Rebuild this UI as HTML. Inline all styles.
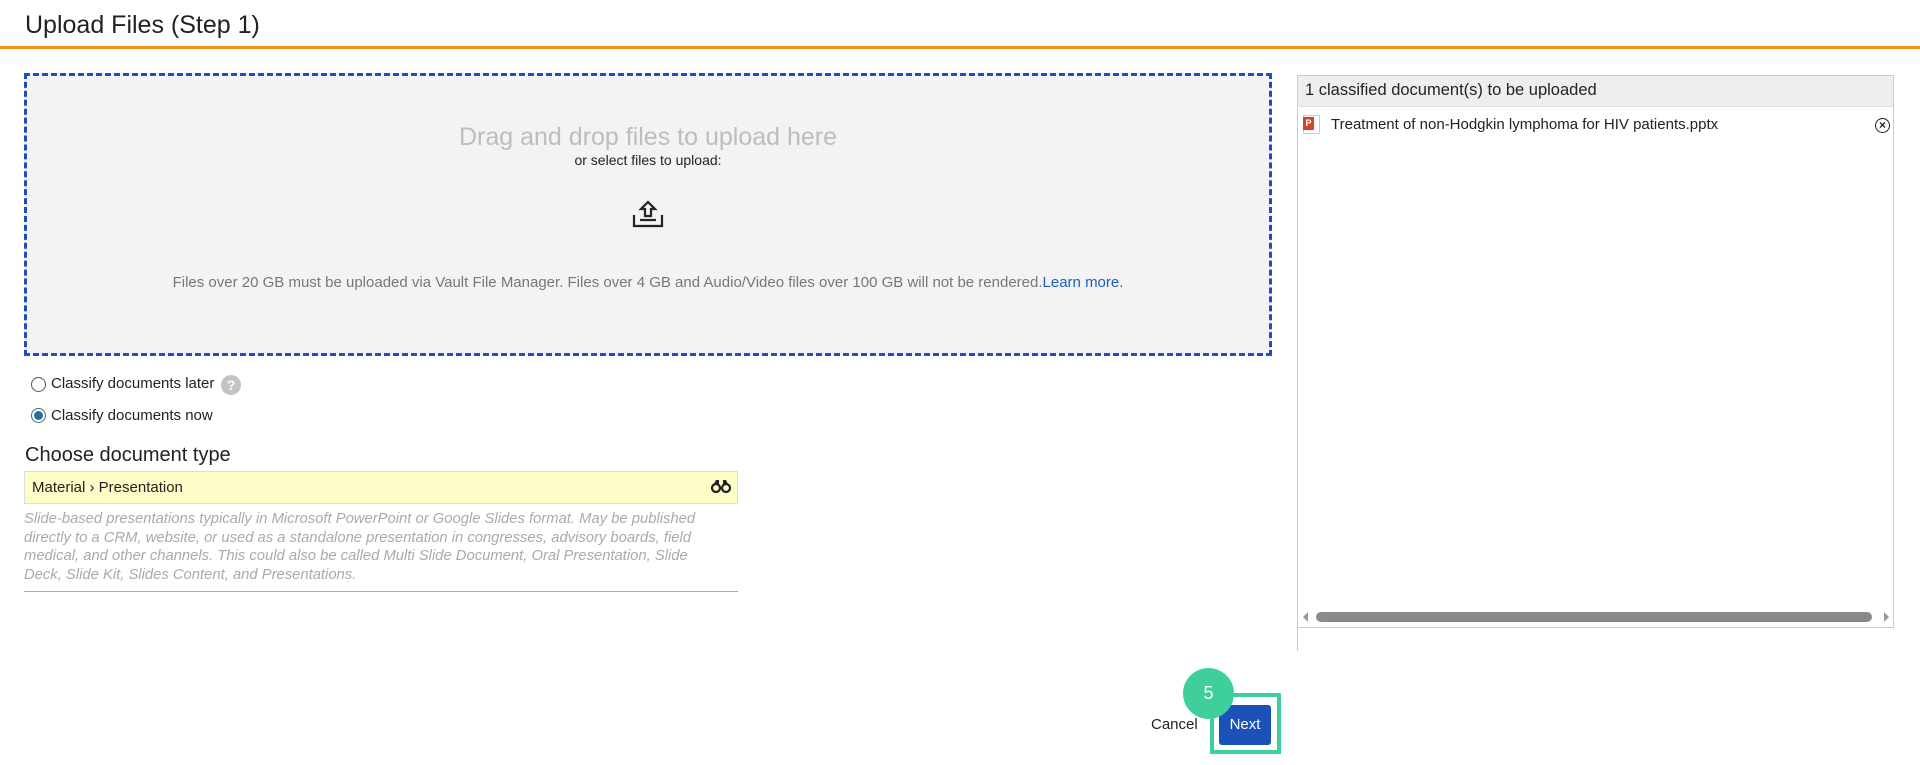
<!DOCTYPE html>
<html><head><meta charset="utf-8"><style>
*{box-sizing:border-box;margin:0;padding:0}
body{width:1920px;height:765px;background:#fff;font-family:"Liberation Sans",Arial,sans-serif;position:relative;overflow:hidden;color:#222}
.a{position:absolute}
</style></head><body>
<div class="a" style="left:25px;top:11px;font-size:25px;color:#222">Upload Files (Step 1)</div>
<div class="a" style="left:0;top:46px;width:1920px;height:3px;background:#f7941d"></div>

<div class="a" style="left:24px;top:73px;width:1248px;height:283px;background:#f3f3f3;border:3px dashed #1f4fbf"></div>
<div class="a" style="left:24px;top:123px;width:1248px;text-align:center;font-size:25px;color:#bdbdbd">Drag and drop files to upload here</div>
<div class="a" style="left:24px;top:152px;width:1248px;text-align:center;font-size:14px;color:#222">or select files to upload:</div>
<svg class="a" style="left:632px;top:199px" width="32" height="30" viewBox="0 0 32 30" fill="none" stroke="#222" stroke-width="2.2">
<path d="M2 16v11h28V16"/><path d="M8 21h16"/><path d="M16 3l-7 7h4v7h6v-7h4z"/></svg>
<div class="a" style="left:24px;top:274px;width:1248px;text-align:center;font-size:15px;color:#777">Files over 20 GB must be uploaded via Vault File Manager. Files over 4 GB and Audio/Video files over 100 GB will not be rendered.<span style="color:#1a5fbf">Learn more.</span></div>

<div class="a" style="left:31px;top:377px;width:15px;height:15px;border:1px solid #555;border-radius:50%;background:#fff"></div>
<div class="a" style="left:51px;top:375px;font-size:15px">Classify documents later</div>
<div class="a" style="left:221px;top:375px;width:20px;height:20px;border-radius:50%;background:#c4c4c4;color:#fff;font-weight:bold;font-size:14px;text-align:center;line-height:20px">?</div>
<div class="a" style="left:31px;top:408px;width:15px;height:15px;border:1px solid #3a6b8c;border-radius:50%;background:#fff"></div>
<div class="a" style="left:34px;top:411px;width:9px;height:9px;border-radius:50%;background:#2e6f99"></div>
<div class="a" style="left:51px;top:407px;font-size:15px">Classify documents now</div>

<div class="a" style="left:25px;top:444px;font-size:20px">Choose document type</div>
<div class="a" style="left:24px;top:471px;width:714px;height:33px;background:#fefdc8;border:1px solid #ddd"></div>
<div class="a" style="left:32px;top:479px;font-size:15px">Material › Presentation</div>
<svg class="a" style="left:711px;top:479px" width="20" height="14" viewBox="0 0 20 14"><circle cx="5" cy="9" r="4" fill="none" stroke="#222" stroke-width="2.2"/><circle cx="15" cy="9" r="4" fill="none" stroke="#222" stroke-width="2.2"/><path d="M3 5l2-4h3v4M17 5l-2-4h-3v4" fill="#222"/></svg>
<div class="a" style="left:24px;top:510px;width:700px;font-size:14.8px;line-height:18.5px;font-style:italic;color:#aaa">Slide-based presentations typically in Microsoft PowerPoint or Google Slides format. May be published directly to a CRM, website, or used as a standalone presentation in congresses, advisory boards, field medical, and other channels. This could also be called Multi Slide Document, Oral Presentation, Slide Deck, Slide Kit, Slides Content, and Presentations.</div>
<div class="a" style="left:24px;top:591px;width:714px;height:1px;background:#aaa"></div>

<div class="a" style="left:1297px;top:75px;width:597px;height:553px;border:1px solid #ccc"></div>
<div class="a" style="left:1297px;top:75px;width:1px;height:576px;background:#ccc"></div>
<div class="a" style="left:1298px;top:76px;width:595px;height:31px;background:#eee;border-bottom:1px solid #ddd"></div>
<div class="a" style="left:1305px;top:81px;font-size:16.5px">1 classified document(s) to be uploaded</div>
<div class="a" style="left:1303px;top:115px;width:17px;height:19px;background:#fff;border:1px solid #ccc"></div>
<div class="a" style="left:1303px;top:117px;width:11px;height:13px;background:#d24726;color:#fff;font-size:9px;font-weight:bold;text-align:center;line-height:13px">P</div>
<div class="a" style="left:1331px;top:116px;font-size:15px">Treatment of non-Hodgkin lymphoma for HIV patients.pptx</div>
<div class="a" style="left:1875px;top:118px;width:15px;height:15px;border:1.5px solid #222;border-radius:50%;font-size:12px;text-align:center;line-height:12px;font-weight:bold">×</div>
<div class="a" style="left:1303px;top:612px;width:0;height:0;border-top:5px solid transparent;border-bottom:5px solid transparent;border-right:5px solid #999"></div>
<div class="a" style="left:1316px;top:612px;width:556px;height:10px;border-radius:5px;background:#8a8a8a"></div>
<div class="a" style="left:1884px;top:612px;width:0;height:0;border-top:5px solid transparent;border-bottom:5px solid transparent;border-left:5px solid #999"></div>

<div class="a" style="left:1151px;top:716px;font-size:15px">Cancel</div>
<div class="a" style="left:1210px;top:693px;width:71px;height:61px;border:4px solid #3ecf9b"></div>
<div class="a" style="left:1219px;top:705px;width:52px;height:40px;background:#1a52b8;border-radius:3px;color:#fff;font-size:15px;text-align:center;line-height:40px">Next</div>
<div class="a" style="left:1183px;top:668px;width:51px;height:51px;border-radius:50%;background:#3ecf9b;color:#fff;font-size:18px;text-align:center;line-height:51px">5</div>
</body></html>
